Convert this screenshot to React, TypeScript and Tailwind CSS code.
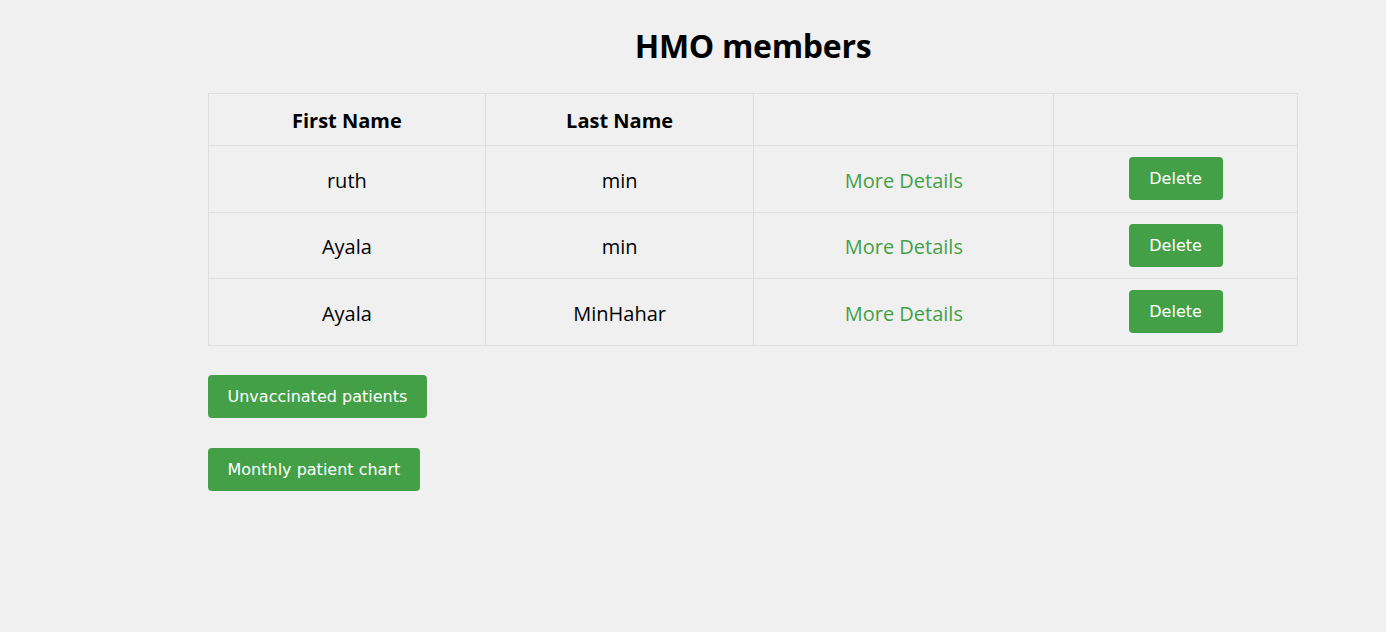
const members = [
  { first: "ruth", last: "min" },
  { first: "Ayala", last: "min" },
  { first: "Ayala", last: "MinHahar" },
];

export default function App() {
  return (
    <div className="min-h-[632px] bg-[#f0f0f0] text-black [font-family:'Open_Sans',sans-serif]">
      <div className="ml-[208px] w-[1090px] pt-[24px]">
        <h1 className="text-center text-[32px] font-bold leading-[44px] mb-[25px] tracking-[-0.3px]">
          HMO members
        </h1>
        <table className="w-full border-collapse text-[20px]">
          <colgroup>
            <col className="w-[277px]" />
            <col className="w-[269px]" />
            <col className="w-[300px]" />
            <col className="w-[244px]" />
          </colgroup>
          <thead>
            <tr className="h-[52px]">
              <th className="border border-[#dddddd] pt-[3px] font-bold">First Name</th>
              <th className="border border-[#dddddd] pt-[3px] font-bold">Last Name</th>
              <th className="border border-[#dddddd]"></th>
              <th className="border border-[#dddddd]"></th>
            </tr>
          </thead>
          <tbody>
            {members.map((m, i) => (
              <tr key={i} className="h-[66.5px]">
                <td className="border border-[#dddddd] pt-[4px] text-center">{m.first}</td>
                <td className="border border-[#dddddd] pt-[4px] text-center">{m.last}</td>
                <td className="border border-[#dddddd] pt-[4px] text-center text-[#43a047]">
                  More Details
                </td>
                <td className="border border-[#dddddd] text-center">
                  <button className="h-[43px] w-[94px] rounded-[4px] bg-[#43a047] pt-[1px] text-[16px] text-white [font-family:'DejaVu_Sans',sans-serif]">
                    Delete
                  </button>
                </td>
              </tr>
            ))}
          </tbody>
        </table>
        <div className="mt-[29px] flex flex-col items-start gap-[30px] [font-family:'DejaVu_Sans',sans-serif]">
          <button className="h-[43px] rounded-[4px] bg-[#43a047] px-[19.5px] pt-[1px] text-[16px] text-white">
            Unvaccinated patients
          </button>
          <button className="h-[43px] rounded-[4px] bg-[#43a047] px-[19.5px] pt-[1px] text-[16px] text-white">
            Monthly patient chart
          </button>
        </div>
      </div>
    </div>
  );
}
